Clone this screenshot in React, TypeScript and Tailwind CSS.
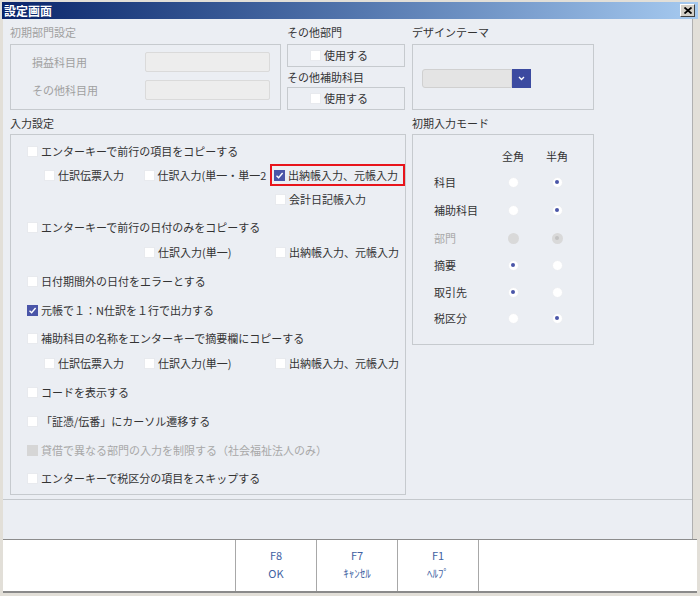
/**
 * 設定画面 dialog
 * Classic-style settings window with input options and footer function keys
 */

const FONT = "font-['Noto_Sans_CJK_JP','Noto_Sans',sans-serif]"

function CheckBox({ checked, disabled }: { checked?: boolean; disabled?: boolean }) {
  if (checked) {
    return (
      <span className="w-[11px] h-[11px] bg-[#4a55a8] flex items-center justify-center shrink-0">
        <svg width="9" height="9" viewBox="0 0 9 9">
          <path d="M1.5 4.8 L3.6 6.8 L7.6 2" stroke="white" strokeWidth="1.4" fill="none" />
        </svg>
      </span>
    )
  }
  return (
    <span
      className={
        disabled
          ? 'w-[11px] h-[11px] bg-[#d6d6d6] shrink-0'
          : 'w-[11px] h-[11px] bg-white border border-[#e8eaee] shrink-0'
      }
    />
  )
}

function Check({
  label,
  checked,
  disabled,
}: {
  label: string
  checked?: boolean
  disabled?: boolean
}) {
  return (
    <div className="flex items-center gap-[3px] whitespace-nowrap">
      <CheckBox checked={checked} disabled={disabled} />
      <span className={disabled ? 'text-[#a8a8a8]' : 'text-[#333]'}>{label}</span>
    </div>
  )
}

function Radio({ on, disabled }: { on?: boolean; disabled?: boolean }) {
  if (disabled) {
    return (
      <span className="w-[11px] h-[11px] rounded-full bg-[#d9d9d9] flex items-center justify-center">
        {on && <span className="w-[4px] h-[4px] rounded-full bg-[#c2c2c2]" />}
      </span>
    )
  }
  return (
    <span className="w-[11px] h-[11px] rounded-full bg-white border border-[#eceef2] flex items-center justify-center">
      {on && <span className="w-[4px] h-[4px] rounded-full bg-[#4a55a8]" />}
    </span>
  )
}

const modeRows: { label: string; zen: boolean; disabled?: boolean; mt: string }[] = [
  { label: '科目', zen: false, mt: 'mt-[6px]' },
  { label: '補助科目', zen: false, mt: 'mt-[8px]' },
  { label: '部門', zen: false, disabled: true, mt: 'mt-[8px]' },
  { label: '摘要', zen: true, mt: 'mt-[7px]' },
  { label: '取引先', zen: true, mt: 'mt-[7px]' },
  { label: '税区分', zen: false, mt: 'mt-[6px]' },
]

export default function App() {
  return (
    <div className={`${FONT} w-[700px] h-[596px] bg-[#e2dfd8] flex flex-col text-[11px] leading-none overflow-hidden`}>
      {/* title bar */}
      <div className="mx-[2px] mt-[2px] h-[17px] bg-gradient-to-r from-[#0a246a] to-[#a6caf0] flex items-center justify-between pl-[2px] pr-[3px]">
        <span className="text-white font-bold text-[12px]">設定画面</span>
        <span className="w-[15px] h-[13px] bg-[#d4d0c8] border border-t-white border-l-white border-r-[#404040] border-b-[#404040] flex items-center justify-center">
          <svg width="8" height="7" viewBox="0 0 8 7">
            <path d="M0.5 0.5 L7.5 6.5 M7.5 0.5 L0.5 6.5" stroke="black" strokeWidth="1.8" />
          </svg>
        </span>
      </div>

      {/* body */}
      <div className="ml-[3px] w-[690px] h-[520px] bg-[#ebeef3] border-r border-[#b0b0b0] flex flex-col">
        <div className="pl-[7px]">
          {/* top row */}
          <div className="flex">
            <div className="w-[271px]">
              <div className="h-[25px] flex items-center pt-[2px] text-[#a0a0a0]">初期部門設定</div>
              <div className="h-[66px] border border-[#c6cace] flex flex-col">
                <div className="flex items-center mt-[7px] h-[20px]">
                  <span className="w-[134px] pl-[21px] text-[#a0a0a0]">損益科目用</span>
                  <span className="w-[125px] h-[20px] bg-[#ededed] border border-[#dadada] rounded-[2px]" />
                </div>
                <div className="flex items-center mt-[8px] h-[20px]">
                  <span className="w-[134px] pl-[21px] text-[#a0a0a0]">その他科目用</span>
                  <span className="w-[125px] h-[20px] bg-[#ededed] border border-[#dadada] rounded-[2px]" />
                </div>
              </div>
            </div>

            <div className="w-[118px] ml-[6px]">
              <div className="h-[25px] flex items-center pt-[2px] text-[#333]">その他部門</div>
              <div className="h-[23px] border border-[#c6cace] flex items-center pl-[22px]">
                <Check label="使用する" />
              </div>
              <div className="h-[20px] flex items-center text-[#333]">その他補助科目</div>
              <div className="h-[23px] border border-[#c6cace] flex items-center pl-[22px]">
                <Check label="使用する" />
              </div>
            </div>

            <div className="w-[182px] ml-[7px]">
              <div className="h-[25px] flex items-center pt-[2px] text-[#333]">デザインテーマ</div>
              <div className="h-[66px] border border-[#c6cace] pl-[9px] pt-[24px]">
                <div className="flex h-[19px] w-[109px]">
                  <span className="flex-1 bg-[#e4e4e4] border border-[#d0d0d0] rounded-l-[3px]" />
                  <span className="w-[19px] bg-[#3b4aa0] flex items-center justify-center">
                    <svg width="7" height="5" viewBox="0 0 7 5">
                      <path d="M1 1 L3.5 3.5 L6 1" stroke="white" strokeWidth="1.3" fill="none" />
                    </svg>
                  </span>
                </div>
              </div>
            </div>
          </div>

          {/* second row */}
          <div className="flex">
            <div className="w-[396px]">
              <div className="h-[24px] flex items-center pt-[3px] text-[#333]">入力設定</div>
              <div className="h-[361px] border border-[#c6cace] pl-[16px] pt-[6px] flex flex-col">
                <div className="h-[20px] flex items-center">
                  <Check label="エンターキーで前行の項目をコピーする" />
                </div>
                <div className="h-[20px] flex items-center mt-[4px] pl-[17px]">
                  <div className="w-[100px]">
                    <Check label="仕訳伝票入力" />
                  </div>
                  <div className="w-[127px]">
                    <Check label="仕訳入力(単一・単一2" />
                  </div>
                  <div className="h-[22px] w-[135px] border-2 border-[#e8141b] flex items-center pl-[2px] shrink-0">
                    <Check label="出納帳入力、元帳入力" checked />
                  </div>
                </div>
                <div className="h-[20px] flex items-center mt-[4px] pl-[248px]">
                  <Check label="会計日記帳入力" />
                </div>
                <div className="h-[20px] flex items-center mt-[8px]">
                  <Check label="エンターキーで前行の日付のみをコピーする" />
                </div>
                <div className="h-[20px] flex items-center mt-[5px] pl-[117px]">
                  <div className="w-[131px]">
                    <Check label="仕訳入力(単一)" />
                  </div>
                  <Check label="出納帳入力、元帳入力" />
                </div>
                <div className="h-[20px] flex items-center mt-[9px]">
                  <Check label="日付期間外の日付をエラーとする" />
                </div>
                <div className="h-[20px] flex items-center mt-[9px]">
                  <Check label="元帳で１：N仕訳を１行で出力する" checked />
                </div>
                <div className="h-[20px] flex items-center mt-[8px]">
                  <Check label="補助科目の名称をエンターキーで摘要欄にコピーする" />
                </div>
                <div className="h-[20px] flex items-center mt-[5px] pl-[17px]">
                  <div className="w-[100px]">
                    <Check label="仕訳伝票入力" />
                  </div>
                  <div className="w-[131px]">
                    <Check label="仕訳入力(単一)" />
                  </div>
                  <Check label="出納帳入力、元帳入力" />
                </div>
                <div className="h-[20px] flex items-center mt-[9px]">
                  <Check label="コードを表示する" />
                </div>
                <div className="h-[20px] flex items-center mt-[9px]">
                  <Check label="「証憑/伝番」にカーソル遷移する" />
                </div>
                <div className="h-[20px] flex items-center mt-[9px]">
                  <Check label="貸借で異なる部門の入力を制限する（社会福祉法人のみ）" disabled />
                </div>
                <div className="h-[20px] flex items-center mt-[8px]">
                  <Check label="エンターキーで税区分の項目をスキップする" />
                </div>
              </div>
            </div>

            <div className="w-[182px] ml-[6px]">
              <div className="h-[24px] flex items-center pt-[3px] text-[#333]">初期入力モード</div>
              <div className="h-[211px] border border-[#c6cace] pl-[21px] pt-[11px] flex flex-col">
                <div className="h-[20px] flex items-center text-[#333]">
                  <span className="w-[57px]" />
                  <span className="w-[44px] text-center">全角</span>
                  <span className="w-[44px] text-center">半角</span>
                </div>
                {modeRows.map((r) => (
                  <div key={r.label} className={`h-[20px] flex items-center ${r.mt}`}>
                    <span className={`w-[57px] ${r.disabled ? 'text-[#a8a8a8]' : 'text-[#333]'}`}>{r.label}</span>
                    <span className="w-[44px] flex justify-center">
                      <Radio on={r.zen} disabled={r.disabled} />
                    </span>
                    <span className="w-[44px] flex justify-center">
                      <Radio on={!r.zen} disabled={r.disabled} />
                    </span>
                  </div>
                ))}
              </div>
            </div>
          </div>
        </div>

        <div className="mt-[4px] border-t border-[#c4c8cc]" />
      </div>

      {/* footer */}
      <div className="ml-[3px] w-[694px] h-[54px] bg-white border-t border-b-2 border-t-[#8c8c8c] border-b-[#8a8a8a] flex text-[#4162a2]">
        <div className="w-[232px]" />
        {[
          ['F8', 'OK'],
          ['F7', 'ｷｬﾝｾﾙ'],
          ['F1', 'ﾍﾙﾌﾟ'],
        ].map(([k, t]) => (
          <div
            key={k}
            className="w-[81px] border-l border-[#a8a8a8] flex flex-col items-center pt-[10px] gap-[7px]"
          >
            <span>{k}</span>
            <span>{t}</span>
          </div>
        ))}
        <div className="flex-1 border-l border-[#a8a8a8]" />
      </div>
    </div>
  )
}
